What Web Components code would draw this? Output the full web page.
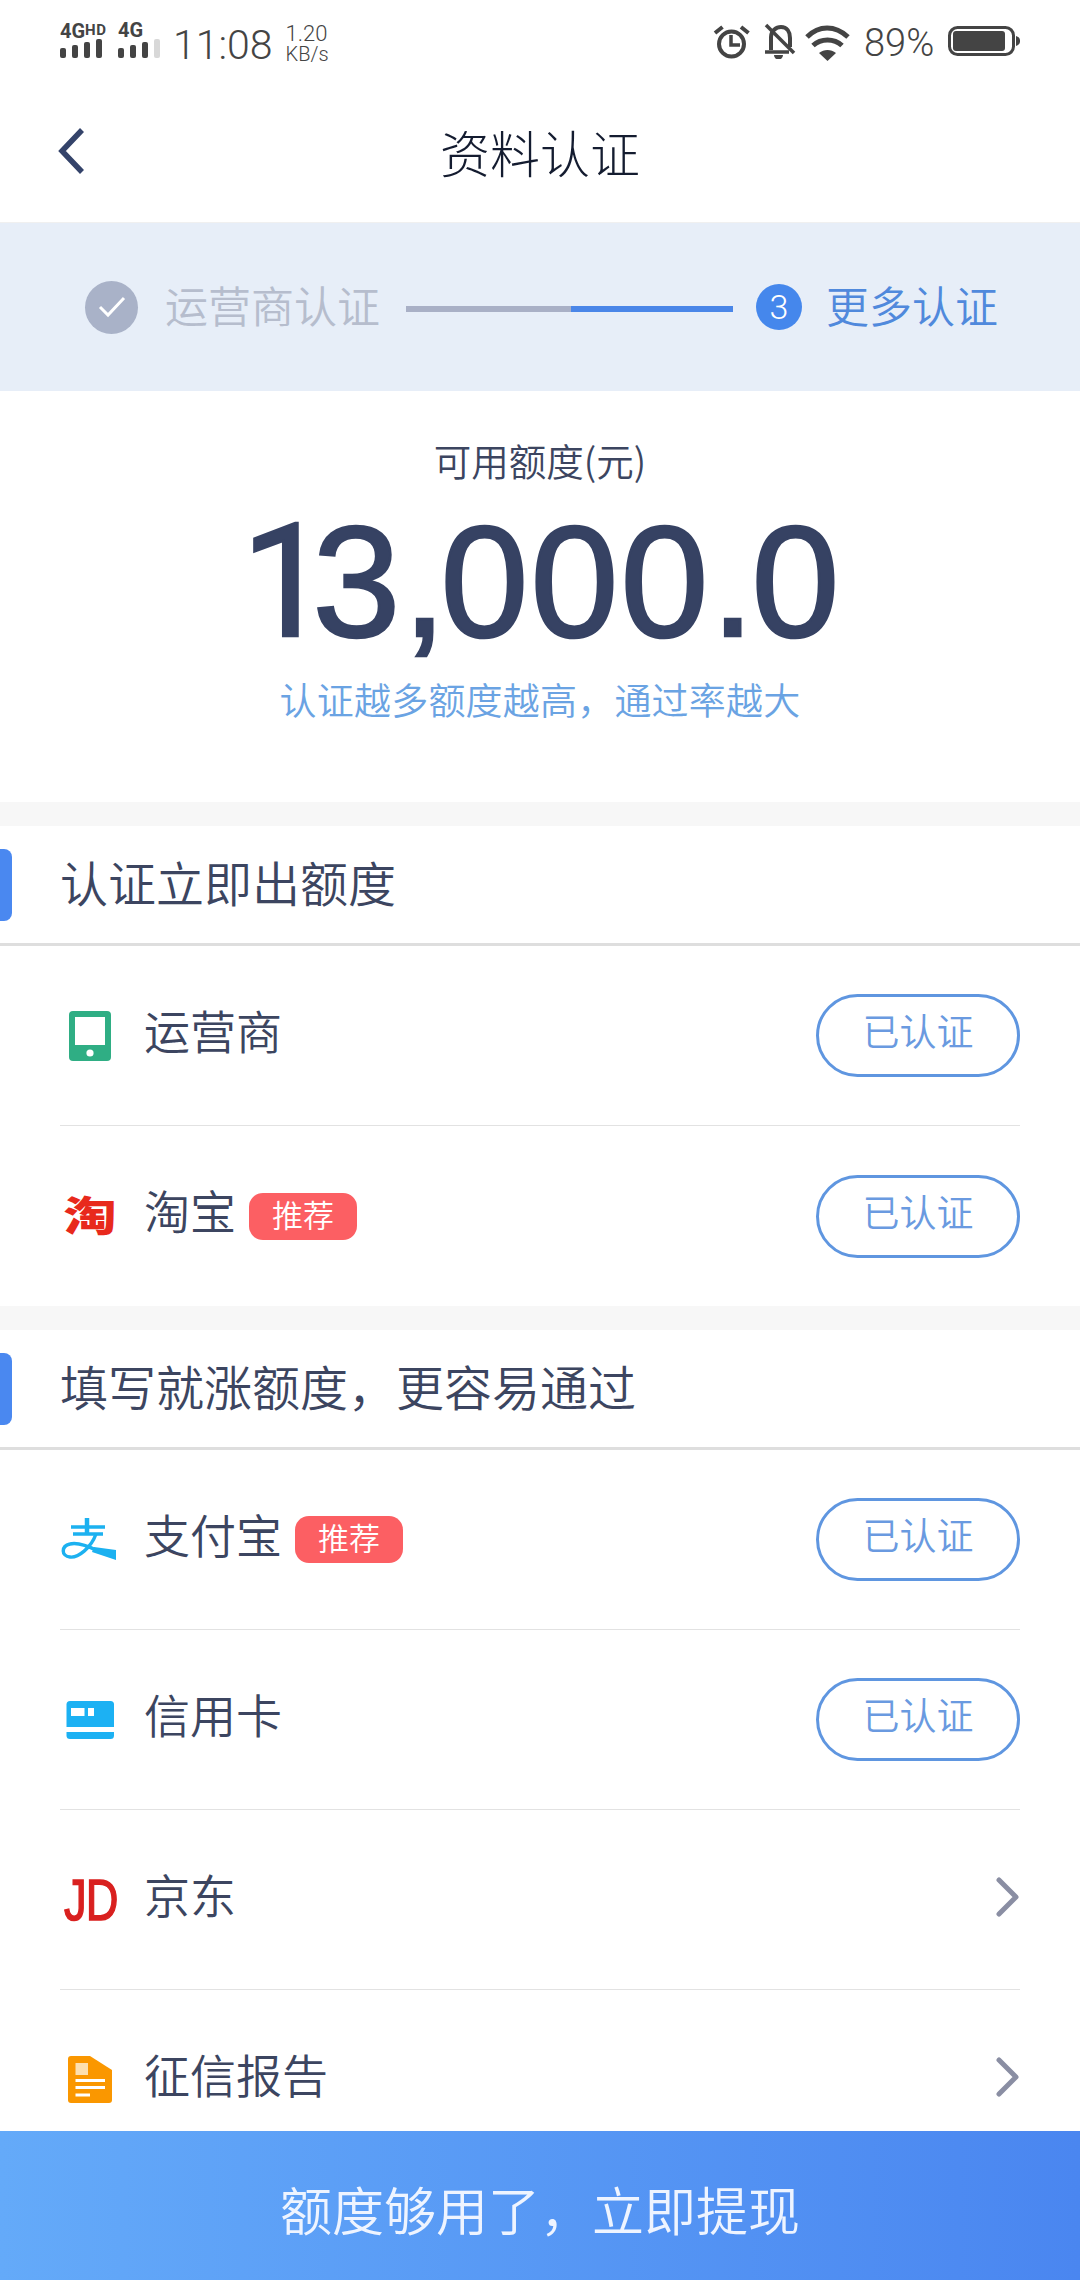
<!DOCTYPE html>
<html lang="zh-CN">
<head>
<meta charset="utf-8">
<title>资料认证</title>
<style>
  html, body {
    margin: 0;
    padding: 0;
    background: #fff;
    font-family: "Noto Sans CJK SC", "Liberation Sans", sans-serif;
    font-weight: 350;
  }
</style>
</head>
<body>
<app-page>
  <status-bar></status-bar>
  <nav-bar>资料认证</nav-bar>
  <step-bar></step-bar>
  <quota-panel label="可用额度(元)" amount="13,000.0" hint="认证越多额度越高，通过率越大"></quota-panel>

  <auth-list>
    <section-head>认证立即出额度</section-head>
    <auth-row>
      <svg slot="icon" width="60" height="60" viewBox="0 0 60 60">
        <rect x="9" y="5" width="42" height="50" rx="4" fill="#2fae84"/>
        <rect x="15" y="11" width="30" height="28" fill="#fff"/>
        <circle cx="30" cy="47" r="3.6" fill="#fff"/>
      </svg>
      运营商
      <verify-button slot="action">已认证</verify-button>
    </auth-row>
    <auth-row last>
      <span slot="icon" class="logo-tao">淘</span>
      淘宝
      <tag-badge slot="badge">推荐</tag-badge>
      <verify-button slot="action">已认证</verify-button>
    </auth-row>
  </auth-list>

  <auth-list>
    <section-head>填写就涨额度，更容易通过</section-head>
    <auth-row>
      <svg slot="icon" width="60" height="60" viewBox="60 1510 60 60">
        <g fill="none" stroke="#1cb1f0" stroke-width="3.600">
          <path d="M71 1527H105M73 1534H103"/>
          <path d="M87 1518V1534" stroke-width="4.500"/>
          <path d="M96 1534C91 1548 78 1558 70 1557C61 1556 61 1546 70 1544C78 1542 88 1546 98 1551" stroke-width="3.400"/>
        </g>
        <path d="M94 1547L116 1550V1560L92 1552Z" fill="#1cb1f0"/>
      </svg>
      支付宝
      <tag-badge slot="badge">推荐</tag-badge>
      <verify-button slot="action">已认证</verify-button>
    </auth-row>
    <auth-row>
      <svg slot="icon" width="60" height="60" viewBox="60 1690 60 60">
        <rect x="66.5" y="1701" width="47.5" height="38" rx="3.5" fill="#1cb1f3"/>
        <rect x="66" y="1727" width="48.5" height="5" fill="#fff"/>
        <rect x="71" y="1708" width="13.5" height="8" fill="#fff"/>
        <rect x="88" y="1708" width="6" height="8" fill="#fff"/>
      </svg>
      信用卡
      <verify-button slot="action">已认证</verify-button>
    </auth-row>
    <auth-row>
      <span slot="icon" class="logo-jd">JD</span>
      京东
      <row-arrow slot="action"></row-arrow>
    </auth-row>
    <auth-row last>
      <svg slot="icon" width="60" height="60" viewBox="60 2050 60 60">
        <path d="M71 2056H90L112 2070V2100A3 3 0 0 1 109 2103H71A3 3 0 0 1 68 2100V2059A3 3 0 0 1 71 2056Z" fill="#fa9700"/>
        <rect x="75.5" y="2063" width="12.5" height="12" fill="#fde0b0"/>
        <path d="M75.5 2080.5H105M75.5 2087.5H105M75.5 2095H90" stroke="#fff" stroke-width="3"/>
      </svg>
      征信报告
      <row-arrow slot="action"></row-arrow>
    </auth-row>
  </auth-list>

  <cta-bar slot="footer">额度够用了，立即提现</cta-bar>
</app-page>

<style>
  .logo-tao {
    display: block;
    margin-top: -3px;
    font: 900 50px/60px "Noto Sans CJK SC", sans-serif;
    color: #e8291c;
    transform: scale(1.06, 0.82);
  }
  .logo-jd {
    display: block;
    font: 400 58px/60px "Liberation Sans", sans-serif;
    -webkit-text-stroke: 1.5px #d9201f;
    color: #d9201f;
    transform: scaleX(0.78);
    letter-spacing: -1px;
    margin-left: -3px;
    white-space: nowrap;
  }
</style>

<script>
class AppPage extends HTMLElement {
  constructor() {
    super()
    this.attachShadow({ mode: "open" })
    this.shadowRoot.innerHTML = `
      <style>
        :host {
          display: flex;
          flex-direction: column;
          width: 1080px;
          height: 2280px;
          overflow: hidden;
          background: #fff;
        }
        .scroll {
          flex: 1;
          min-height: 0;
          overflow: hidden;
        }
      </style>
      <div class="scroll"><slot></slot></div>
      <slot name="footer"></slot>
    `
  }
}

class StatusBar extends HTMLElement {
  constructor() {
    super()
    this.attachShadow({ mode: "open" })
    this.shadowRoot.innerHTML = `
      <style>
        :host {
          display: flex;
          justify-content: space-between;
          box-sizing: border-box;
          height: 75px;
          padding: 23px 60px 0 60px;
          color: #444;
          font-family: Roboto, "Liberation Sans", sans-serif;
          font-weight: 400;
        }
        .left, .right {
          display: flex;
          align-items: flex-start;
        }
        .sig {
          display: flex;
          flex-direction: column;
          width: 46px;
          margin-right: 12px;
        }
        .sig b {
          font-size: 20px;
          line-height: 14px;
          height: 14px;
          font-weight: 700;
          white-space: nowrap;
        }
        .sig b i {
          font-style: normal;
          font-size: 15px;
          vertical-align: 3px;
          letter-spacing: 0.5px;
        }
        .bars {
          display: flex;
          align-items: flex-end;
          gap: 6px;
          height: 20px;
          margin-top: 1px;
        }
        .bars span {
          width: 6px;
          border-radius: 2px;
          background: #444;
        }
        .bars .off { background: #d8d8d8; }
        .time {
          margin: 5px 0 0 -3px;
          font-size: 41px;
          line-height: 34px;
          font-weight: 300;
        }
        .speed {
          margin: 0 0 0 13px;
          font-size: 22px;
          line-height: 21px;
          font-weight: 300;
        }
        .speed div + div { font-size: 20px; }
        .batt {
          margin: 5px 0 0 14px;
          font-size: 38px;
          line-height: 30px;
          width: 71px;
          font-weight: 300;
          white-space: nowrap;
        }
        svg { display: block; }
      </style>
      <div class="left">
        <div class="sig">
          <b>4G<i>HD</i></b>
          <div class="bars"><span style="height:10px"></span><span style="height:13px"></span><span style="height:16px"></span><span style="height:19px"></span></div>
        </div>
        <div class="sig">
          <b>4G</b>
          <div class="bars"><span style="height:10px"></span><span style="height:13px"></span><span style="height:16px"></span><span class="off" style="height:19px"></span></div>
        </div>
        <div class="time">11:08</div>
        <div class="speed"><div>1.20</div><div>KB/s</div></div>
      </div>
      <div class="right">
        <svg width="37" height="36" viewBox="714 23 37 36" fill="none" stroke="#444">
          <circle cx="732.5" cy="44" r="12.5" stroke-width="4"/>
          <path d="M732 35V45H741" stroke-width="3.500"/>
          <path d="M716 33L723.5 27M742 27L749.5 33" stroke-width="4"/>
        </svg>
        <svg style="margin-left:14px" width="32" height="36" viewBox="765 23 32 36" fill="none" stroke="#444">
          <path d="M772 50V37C772 31 777 27 782 27C788 27 791 32 791 38V47" stroke-width="4"/>
          <path d="M766 52H790" stroke-width="3.500"/>
          <path d="M775 55A4.5 4.5 0 0 0 784 55Z" fill="#444" stroke="none"/>
          <path d="M767 25L795 53" stroke-width="3.500"/>
        </svg>
        <svg style="margin-left:9px" width="45" height="38" viewBox="806 22 45 38" fill="none" stroke="#444" stroke-width="5">
          <path d="M808 36C820 24 836 24 849 36"/>
          <path d="M814 44.500C822 37 835 37 843 44.500"/>
          <path d="M820 52C825 48 832 48 837 52L828.500 60Z" fill="#444" stroke="none"/>
        </svg>
        <div class="batt">89%</div>
        <svg style="margin-left:13px;margin-top:2px" width="72" height="32" viewBox="948 26 72 32">
          <rect x="949.500" y="28.500" width="64" height="27" rx="8" fill="none" stroke="#444" stroke-width="3"/>
          <rect x="953" y="32" width="52" height="20" rx="3" fill="#444"/>
          <path d="M1016 37A6 5 0 0 1 1020 42A6 5 0 0 1 1016 47Z" fill="#444"/>
        </svg>
      </div>
    `
  }
}

class NavBar extends HTMLElement {
  constructor() {
    super()
    this.attachShadow({ mode: "open" })
    this.shadowRoot.innerHTML = `
      <style>
        :host {
          display: grid;
          grid-template-columns: 1fr auto 1fr;
          align-items: center;
          box-sizing: border-box;
          height: 148px;
          padding: 4px 58px 0;
          font-size: 50px;
          font-weight: 300;
          color: #141c30;
          border-bottom: 1px solid #f0f0f0;
        }
        svg { display: block; }
      </style>
      <svg width="28" height="46" viewBox="0 0 28 46" fill="none">
        <path d="M24 2L4 23L24 44" stroke="#34436a" stroke-width="5.500"/>
      </svg>
      <div class="title"><slot></slot></div>
      <div></div>
    `
  }
}

class StepBar extends HTMLElement {
  constructor() {
    super()
    this.attachShadow({ mode: "open" })
    this.shadowRoot.innerHTML = `
      <style>
        :host {
          display: flex;
          align-items: center;
          box-sizing: border-box;
          height: 168px;
          padding: 0 0 0 85px;
          background: #e7eef8;
          font-size: 43px;
        }
        .done-dot {
          flex: none;
          display: flex;
          align-items: center;
          justify-content: center;
          width: 53px;
          height: 53px;
          border-radius: 50%;
          background: #a9b2c8;
        }
        .done { margin: -6px 0 0 27px; width: 216px; color: #b6bdcd; white-space: nowrap; }
        .line {
          display: flex;
          width: 327px;
          height: 6px;
          margin: 4px 23px 0 25px;
          background: #4a86e8;
        }
        .line span { width: 165px; background: #a9b0c6; }
        .num {
          flex: none;
          width: 46px;
          height: 46px;
          border-radius: 50%;
          background: #4587ec;
          color: #fff;
          text-align: center;
          font: 300 34px/46px Roboto, "Liberation Sans", sans-serif;
        }
        .now { margin: -6px 0 0 24px; color: #5089dc; white-space: nowrap; }
      </style>
      <div class="done-dot">
        <svg width="30" height="24" viewBox="0 0 30 24" fill="none"><path d="M3 12L11 20L27 3" stroke="#fff" stroke-width="3"/></svg>
      </div>
      <div class="done">运营商认证</div>
      <div class="line"><span></span></div>
      <div class="num">3</div>
      <div class="now">更多认证</div>
    `
  }
}

class QuotaPanel extends HTMLElement {
  constructor() {
    super()
    this.attachShadow({ mode: "open" })
    this.shadowRoot.innerHTML = `
      <style>
        :host {
          display: flex;
          flex-direction: column;
          align-items: center;
          box-sizing: border-box;
          height: 411px;
          padding-top: 43px;
          background: #fff;
        }
        .label { font-size: 37.5px; line-height: 52px; color: #3c4560; }
        .amount {
          margin: 5px 0 0 3px;
          font: 400 158px/180px "Liberation Sans", sans-serif;
          letter-spacing: 2.2px;
          -webkit-text-stroke: 2.5px #364263;
          color: #364263;
          white-space: nowrap;
        }
        .amount .one { font-family: Roboto, sans-serif; letter-spacing: -17.7px; }
        .amount .comma { letter-spacing: -6px; }
        .amount .dot { letter-spacing: -3px; }
        .hint { margin-top: 1px; font-size: 37px; letter-spacing: 0.2px; line-height: 52px; color: #6aa3e3; }
      </style>
      <div class="label"></div>
      <div class="amount"></div>
      <div class="hint"></div>
    `
  }

  connectedCallback() {
    this.shadowRoot.querySelector(".label").textContent = this.getAttribute("label")
    // the 1 and the punctuation sit tighter than the other digits
    this.shadowRoot.querySelector(".amount").innerHTML = this.getAttribute("amount")
      .replace(/1/g, '<span class="one">1</span>')
      .replace(/,/g, '<span class="comma">,</span>')
      .replace(/\./g, '<span class="dot">.</span>')
    this.shadowRoot.querySelector(".hint").textContent = this.getAttribute("hint")
  }
}

class AuthList extends HTMLElement {
  constructor() {
    super()
    this.attachShadow({ mode: "open" })
    this.shadowRoot.innerHTML = `
      <style>
        :host {
          display: block;
          border-top: 24px solid #f7f7f7;
          background: #fff;
        }
      </style>
      <slot></slot>
    `
  }
}

class SectionHead extends HTMLElement {
  constructor() {
    super()
    this.attachShadow({ mode: "open" })
    this.shadowRoot.innerHTML = `
      <style>
        :host {
          display: flex;
          align-items: center;
          box-sizing: border-box;
          height: 120px;
          border-bottom: 3px solid #dedede;
          font-size: 48px;
          color: #3c4560;
        }
        .tab {
          width: 12px;
          height: 72px;
          margin-right: 48px;
          border-radius: 0 8px 8px 0;
          background: #4a88f0;
        }
        .text { margin-top: -8px; }
      </style>
      <div class="tab"></div>
      <div class="text"><slot></slot></div>
    `
  }
}

class AuthRow extends HTMLElement {
  constructor() {
    super()
    this.attachShadow({ mode: "open" })
    this.shadowRoot.innerHTML = `
      <style>
        :host {
          display: block;
          padding: 0 60px;
        }
        .row {
          display: flex;
          align-items: center;
          box-sizing: border-box;
          height: 180px;
          border-bottom: 1px solid #e2e2e2;
          font-size: 46px;
          color: #3c4560;
        }
        :host([last]) .row { border-bottom: 0; }
        .icon {
          flex: none;
          width: 60px;
          height: 60px;
          margin-right: 24px;
          text-align: center;
        }
        .label { margin-top: -14px; white-space: nowrap; }
        .badge { margin-left: 13px; }
        .action { margin-left: auto; }
      </style>
      <div class="row">
        <div class="icon"><slot name="icon"></slot></div>
        <div class="label"><slot></slot></div>
        <div class="badge"><slot name="badge"></slot></div>
        <div class="action"><slot name="action"></slot></div>
      </div>
    `
  }
}

class TagBadge extends HTMLElement {
  constructor() {
    super()
    this.attachShadow({ mode: "open" })
    this.shadowRoot.innerHTML = `
      <style>
        :host {
          display: block;
          box-sizing: border-box;
          width: 108px;
          height: 47px;
          border-radius: 14px;
          background: #fc5f63;
          color: #fff;
          font-size: 31px;
          line-height: 42px;
          text-align: center;
        }
      </style>
      <slot></slot>
    `
  }
}

class VerifyButton extends HTMLElement {
  constructor() {
    super()
    this.attachShadow({ mode: "open" })
    this.shadowRoot.innerHTML = `
      <style>
        :host {
          display: block;
          box-sizing: border-box;
          width: 204px;
          height: 83px;
          border: 3px solid #5f96e0;
          border-radius: 42px;
          color: #6a9ae0;
          font-size: 37px;
          line-height: 66px;
          text-align: center;
        }
      </style>
      <slot></slot>
    `
  }
}

class RowArrow extends HTMLElement {
  constructor() {
    super()
    this.attachShadow({ mode: "open" })
    this.shadowRoot.innerHTML = `
      <style>
        :host { display: block; margin-bottom: 6px; }
        svg { display: block; }
      </style>
      <svg width="24" height="40" viewBox="0 0 24 40" fill="none">
        <path d="M3 3L20 20L3 37" stroke="#8a8ea3" stroke-width="5" stroke-linecap="round" stroke-linejoin="round"/>
      </svg>
    `
  }
}

class CtaBar extends HTMLElement {
  constructor() {
    super()
    this.attachShadow({ mode: "open" })
    this.shadowRoot.innerHTML = `
      <style>
        :host {
          flex: none;
          display: flex;
          align-items: center;
          justify-content: center;
          box-sizing: border-box;
          height: 149px;
          background: linear-gradient(90deg, #64aaf9, #4a86f0);
          color: #eef4ff;
          font-size: 52px;
          padding-top: 6px;
        }
      </style>
      <slot></slot>
    `
  }
}

customElements.define("app-page", AppPage)
customElements.define("status-bar", StatusBar)
customElements.define("nav-bar", NavBar)
customElements.define("step-bar", StepBar)
customElements.define("quota-panel", QuotaPanel)
customElements.define("auth-list", AuthList)
customElements.define("section-head", SectionHead)
customElements.define("auth-row", AuthRow)
customElements.define("tag-badge", TagBadge)
customElements.define("verify-button", VerifyButton)
customElements.define("row-arrow", RowArrow)
customElements.define("cta-bar", CtaBar)
</script>
</body>
</html>
